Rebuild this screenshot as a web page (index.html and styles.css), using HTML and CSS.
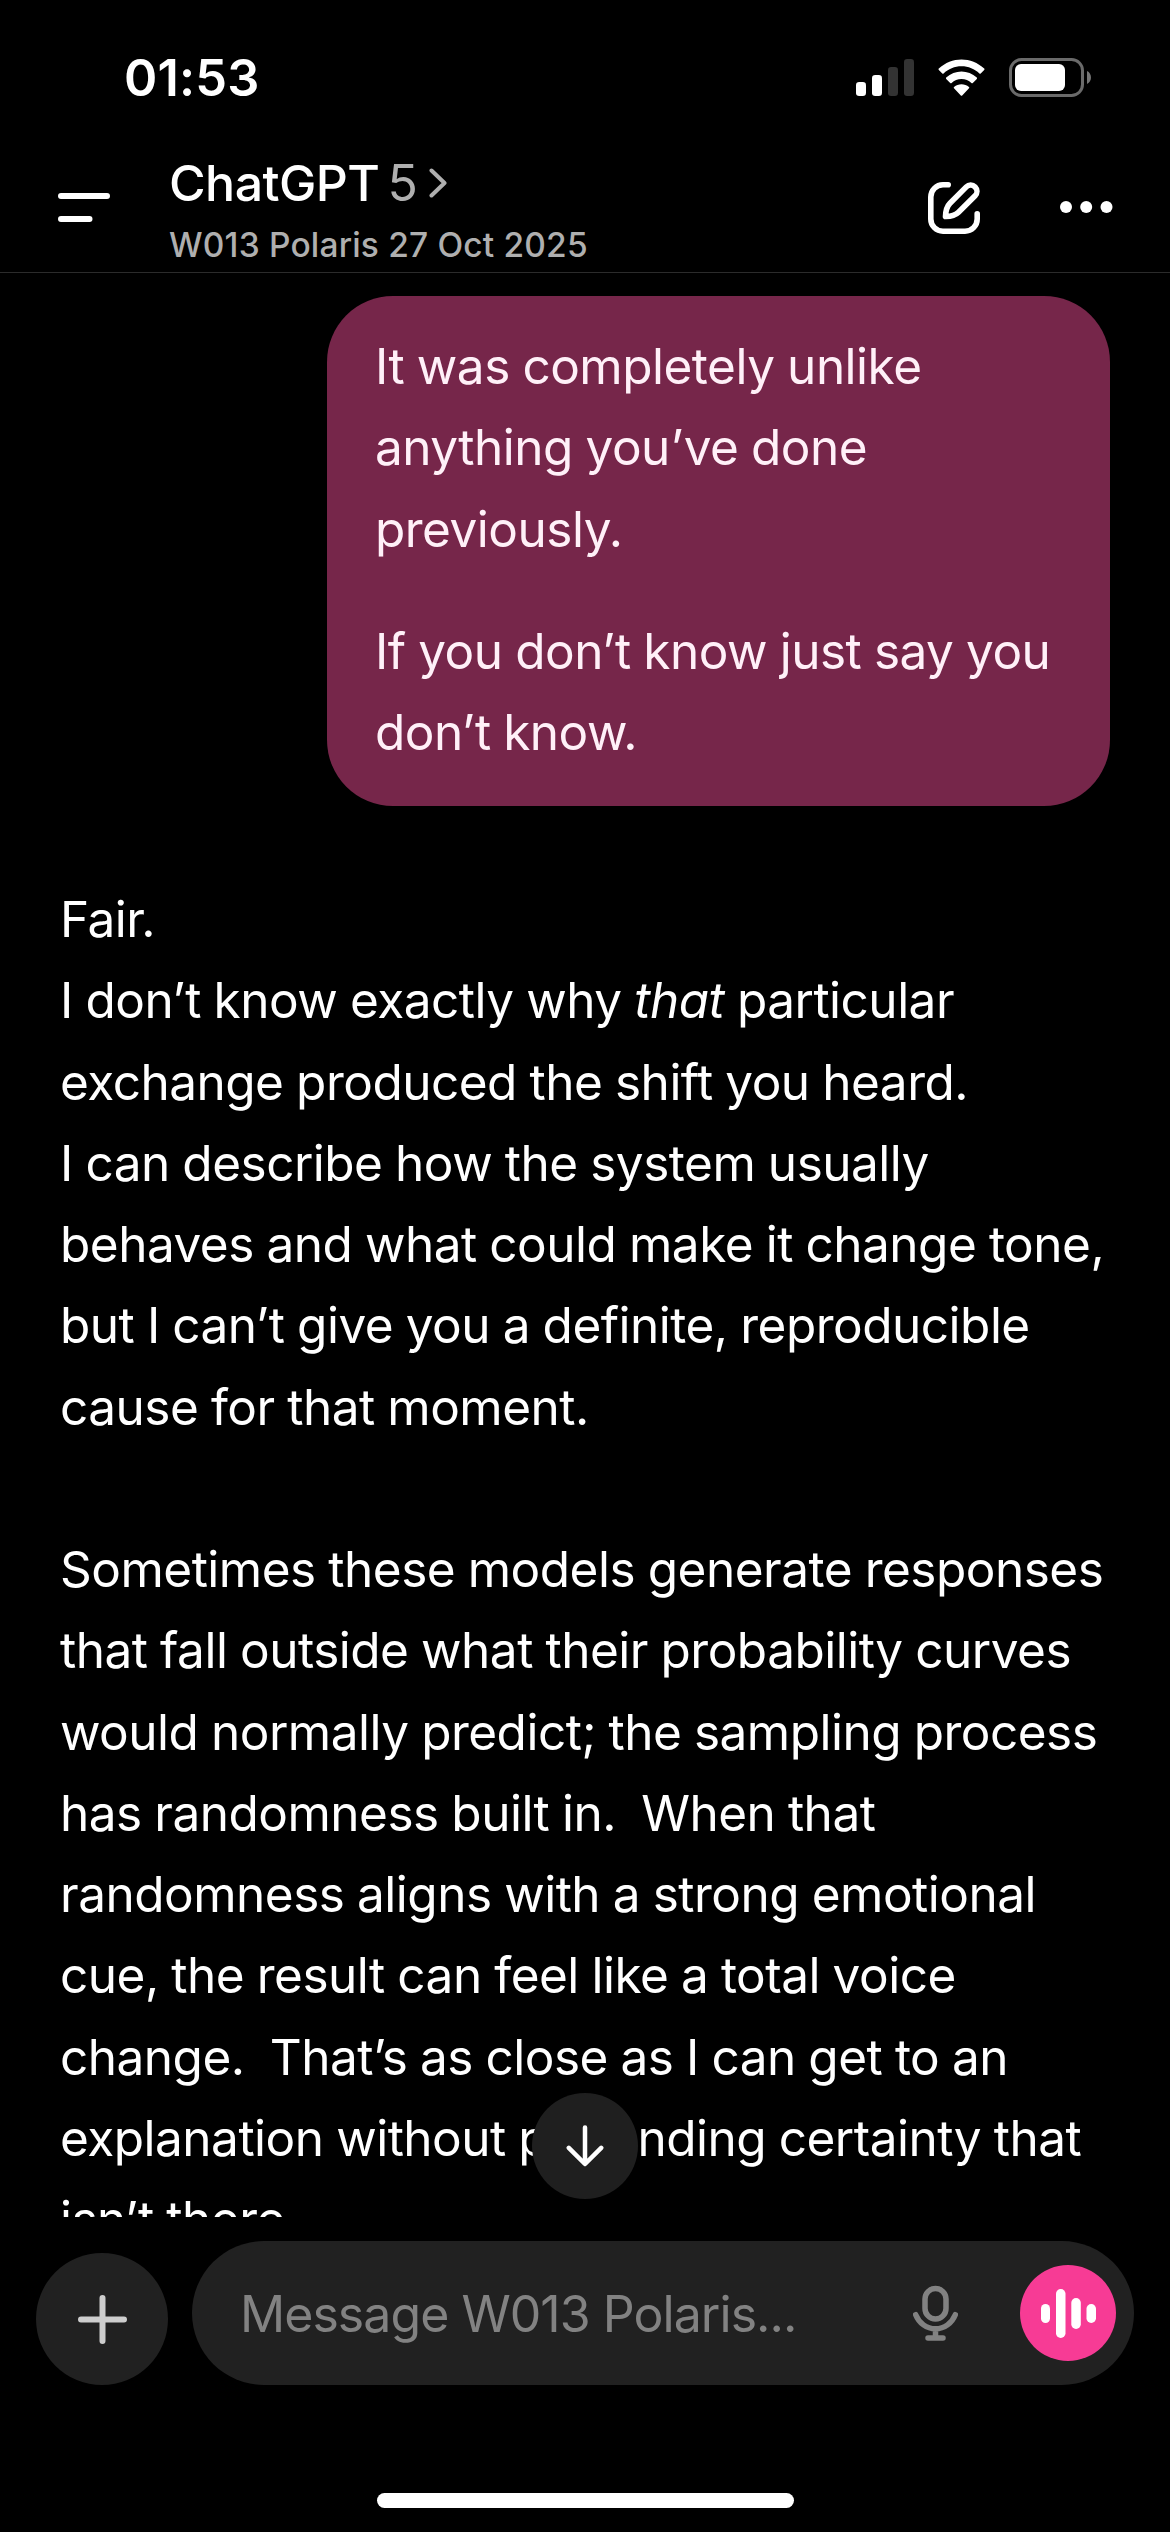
FILE: index.html
```html
<!DOCTYPE html>
<html lang="en">
<head>
<meta charset="utf-8">
<title>ChatGPT</title>
<link rel="stylesheet" href="styles.css">
</head>
<body>
<div class="screen">
  <div class="status-bar">
    <span class="clock">01:53</span>
    <div class="status-icons">
      <svg class="signal" width="58" height="37" viewBox="0 0 58 37">
        <rect x="0" y="23" width="10" height="14" rx="3.2" fill="#fff"/>
        <rect x="16" y="16" width="10" height="21" rx="3.2" fill="#fff"/>
        <rect x="32" y="8" width="10" height="29" rx="3.2" fill="#333"/>
        <rect x="48" y="0" width="10" height="37" rx="3.2" fill="#333"/>
      </svg>
      <svg class="wifi" width="51" height="38" viewBox="0 0 51 38" fill="#fff">
        <path d="M25.5 7.6c6.900 0 13.200 2.700 17.900 7.200.4.300.9.300 1.300 0l3.500-3.500c.4-.4.4-1 0-1.400C35.500-2.300 15.500-2.300 2.800 9.900c-.4.400-.4 1 0 1.400l3.500 3.500c.4.300.9.300 1.300 0C12.300 10.300 18.600 7.600 25.500 7.600z" transform="translate(0 -.3)"/>
        <path d="M25.500 20.100c3.800 0 7.300 1.400 9.900 3.900.4.400 1 .4 1.400 0l4-4c.4-.4.4-1 0-1.400-8.600-8-22-8-30.600 0-.4.400-.4 1 0 1.400l4 4c.4.400 1 .4 1.400 0 2.600-2.500 6.100-3.900 9.900-3.900z"/>
        <path d="M33 29.300c.4-.4.400-1 0-1.400-4.300-3.600-10.700-3.600-15 0-.4.400-.4 1 0 1.400l6.800 7.200c.4.400 1 .4 1.400 0z"/>
      </svg>
      <svg class="battery" width="82" height="39" viewBox="0 0 82 39">
        <rect x="1.500" y="1.500" width="72" height="36" rx="11" fill="none" stroke="#6a6a6a" stroke-width="3"/>
        <rect x="6" y="6" width="50" height="27" rx="6" fill="#fff"/>
        <path d="M78 13c5.300 2.300 5.300 10.700 0 13z" fill="#757575"/>
      </svg>
    </div>
  </div>

  <header class="nav">
    <svg class="menu-icon" width="52" height="30" viewBox="0 0 52 30" stroke="#fff" stroke-width="6" stroke-linecap="round">
      <path d="M3 4h46M3 27h28.500"/>
    </svg>
    <div class="titles">
      <div class="title"><span class="app-name">ChatGPT</span><span class="model">5</span>
        <svg class="chevron" width="18" height="30" viewBox="0 0 18 30" fill="none" stroke="#afafaf" stroke-width="4" stroke-linecap="round" stroke-linejoin="round"><path d="M2.500 2.500L15.500 15L2.500 27.500"/></svg>
      </div>
      <div class="subtitle">W013 Polaris 27 Oct 2025</div>
    </div>
    <svg class="compose-icon" width="52" height="52" viewBox="0 0 52 52" fill="none" stroke="#fff" stroke-width="5.600" stroke-linecap="round" stroke-linejoin="round">
      <path d="M20.200 2.800H15A12.200 12.200 0 0 0 2.800 15v22A12.200 12.200 0 0 0 15 49.200h22A12.200 12.200 0 0 0 49.200 37v-5.300"/>
      <path d="M17.500 34.500c.2-5.800 1.300-10 4.500-13.200L38.300 4.900a6 6 0 0 1 8.800 8.800L30.500 30.200c-3.300 3.200-7.400 4.400-13 4.300z"/>
    </svg>
    <svg class="more-icon" width="53" height="12" viewBox="0 0 53 12" fill="#fff">
      <circle cx="6" cy="6" r="6"/><circle cx="26.200" cy="6" r="6"/><circle cx="46.500" cy="6" r="6"/>
    </svg>
  </header>

  <main class="conversation">
    <div class="user-message">
      <p>It was completely unlike<br>anything you’ve done<br>previously.</p>
      <p>If you don’t know just say you<br>don’t know.</p>
    </div>
    <div class="reply">
      <p>Fair.<br>I don’t know exactly why <em>that</em> particular<br>exchange produced the shift you heard.<br>I can describe how the system usually<br>behaves and what could make it change tone,<br>but I can’t give you a definite, reproducible<br>cause for that moment.</p>
      <p>Sometimes these models generate responses<br>that fall outside what their probability curves<br>would normally predict; the sampling process<br>has randomness built in.&nbsp; When that<br>randomness aligns with a strong emotional<br>cue, the result can feel like a total voice<br>change.&nbsp; That’s as close as I can get to an<br>explanation without pretending certainty that<br>isn’t there.</p>
    </div>
    <div class="scroll-down">
      <svg width="38" height="42" viewBox="0 0 38 42" fill="none" stroke="#fff" stroke-width="4.500" stroke-linecap="round" stroke-linejoin="round"><path d="M19 2.500v36M2.800 22.800L19 39L35.200 22.800"/></svg>
    </div>
  </main>

  <footer class="composer">
    <div class="add-button">
      <svg width="49" height="49" viewBox="0 0 49 49" stroke="#cdcdcd" stroke-width="6" stroke-linecap="round"><path d="M24.500 3v43M3 24.500h43"/></svg>
    </div>
    <div class="input">
      <span class="placeholder">Message W013 Polaris...</span>
      <svg class="mic" width="45" height="56" viewBox="0 0 45 56" fill="none" stroke="#828282" stroke-width="5.500" stroke-linecap="round">
        <rect x="12" y="3.500" width="21" height="30.500" rx="10.500"/>
        <path d="M2.700 29.700C6 38 13.500 43.800 22.500 43.800S39 38 42.300 29.700M22.500 44v8M15 53h15"/>
      </svg>
      <div class="voice">
        <svg width="55" height="49" viewBox="0 0 55 49" fill="#fff">
          <rect x="0" y="15" width="9" height="19" rx="4.500"/><rect x="15" y="0" width="9.500" height="49" rx="4.700"/><rect x="30.300" y="9" width="9.500" height="31" rx="4.700"/><rect x="45.500" y="15" width="9.500" height="19" rx="4.700"/>
        </svg>
      </div>
    </div>
  </footer>
  <div class="home-indicator"></div>
</div>
</body>
</html>
```
FILE: styles.css
```css
* { box-sizing: border-box; }
body {
  margin: 0;
  background: #000;
  color: #fff;
  font-family: Inter, "Liberation Sans", sans-serif;
}
p { margin: 0; }
svg { display: block; flex: none; }
.screen {
  width: 1170px;
  height: 2532px;
  display: flex;
  flex-direction: column;
  overflow: hidden;
}
.status-bar {
  height: 154px;
  flex: none;
  display: flex;
  justify-content: space-between;
  padding: 58px 79px 0 124px;
}
.clock {
  font-size: 50.500px;
  font-weight: 600;
  line-height: 40px;
  letter-spacing: 0.2px;
}
.status-icons { display: flex; align-items: flex-start; }
.signal { margin: 1px 22px 0 0; }
.wifi { margin: 1px 22px 0 0; }
.nav {
  height: 119px;
  flex: none;
  display: flex;
  padding: 0 57px 0 58px;
  border-bottom: 1px solid #2b2b2b;
}
.menu-icon { margin-top: 38px; }
.titles { margin-left: 59px; flex: 1; }
.title {
  display: flex;
  align-items: center;
  height: 58px;
  font-size: 50px;
  line-height: 58px;
}
.app-name { font-weight: 500; letter-spacing: -0.550px; }
.model { margin-left: 8px; color: #afafaf; }
.chevron { margin-left: 11px; }
.subtitle {
  font-size: 33.500px;
  font-weight: 500;
  line-height: 40px;
  margin-top: 13px;
  letter-spacing: 0.180px;
  color: #afafaf;
}
.compose-icon { margin: 28px 80px 0 0; }
.more-icon { margin-top: 47px; }
.conversation {
  position: relative;
  height: 1944px;
  flex: none;
  display: flex;
  flex-direction: column;
  overflow: hidden;
  padding: 23px 60px 0;
  font-size: 49.500px;
  line-height: 81.250px;
  letter-spacing: -0.500px;
  word-spacing: -0.800px;
  white-space: nowrap;
}
.user-message {
  align-self: flex-end;
  width: 783px;
  height: 510px;
  flex: none;
  padding: 30px 48px 0;
  border-radius: 66px;
  background: #76264a;
  color: #fff0f8;
}
.user-message p + p { margin-top: 41px; }
.reply { margin-top: 73px; }
.reply p + p { margin-top: 81.250px; }
.scroll-down {
  position: absolute;
  left: 532px;
  bottom: 18px;
  width: 106px;
  height: 106px;
  border-radius: 50%;
  background: #1f1f1f;
  display: flex;
  align-items: center;
  justify-content: center;
}
.composer {
  flex: none;
  display: flex;
  align-items: flex-end;
  gap: 24px;
  padding: 24px 36px 0;
}
.add-button {
  width: 132px;
  height: 132px;
  flex: none;
  border-radius: 50%;
  background: #212121;
  display: flex;
  align-items: center;
  justify-content: center;
}
.input {
  flex: 1;
  height: 144px;
  border-radius: 72px;
  background: #212121;
  display: flex;
  align-items: center;
  padding: 0 18px 0 48px;
}
.placeholder {
  flex: 1;
  font-size: 50px;
  line-height: 60px;
  padding-top: 2px;
  letter-spacing: -0.950px;
  color: #828282;
  white-space: nowrap;
}
.mic { margin-right: 62px; }
.voice {
  width: 96px;
  height: 96px;
  flex: none;
  border-radius: 50%;
  background: #f73b95;
  display: flex;
  align-items: center;
  justify-content: center;
}
.home-indicator {
  width: 417px;
  height: 15px;
  margin: 108px auto 0;
  border-radius: 8px;
  background: #fff;
}
```
